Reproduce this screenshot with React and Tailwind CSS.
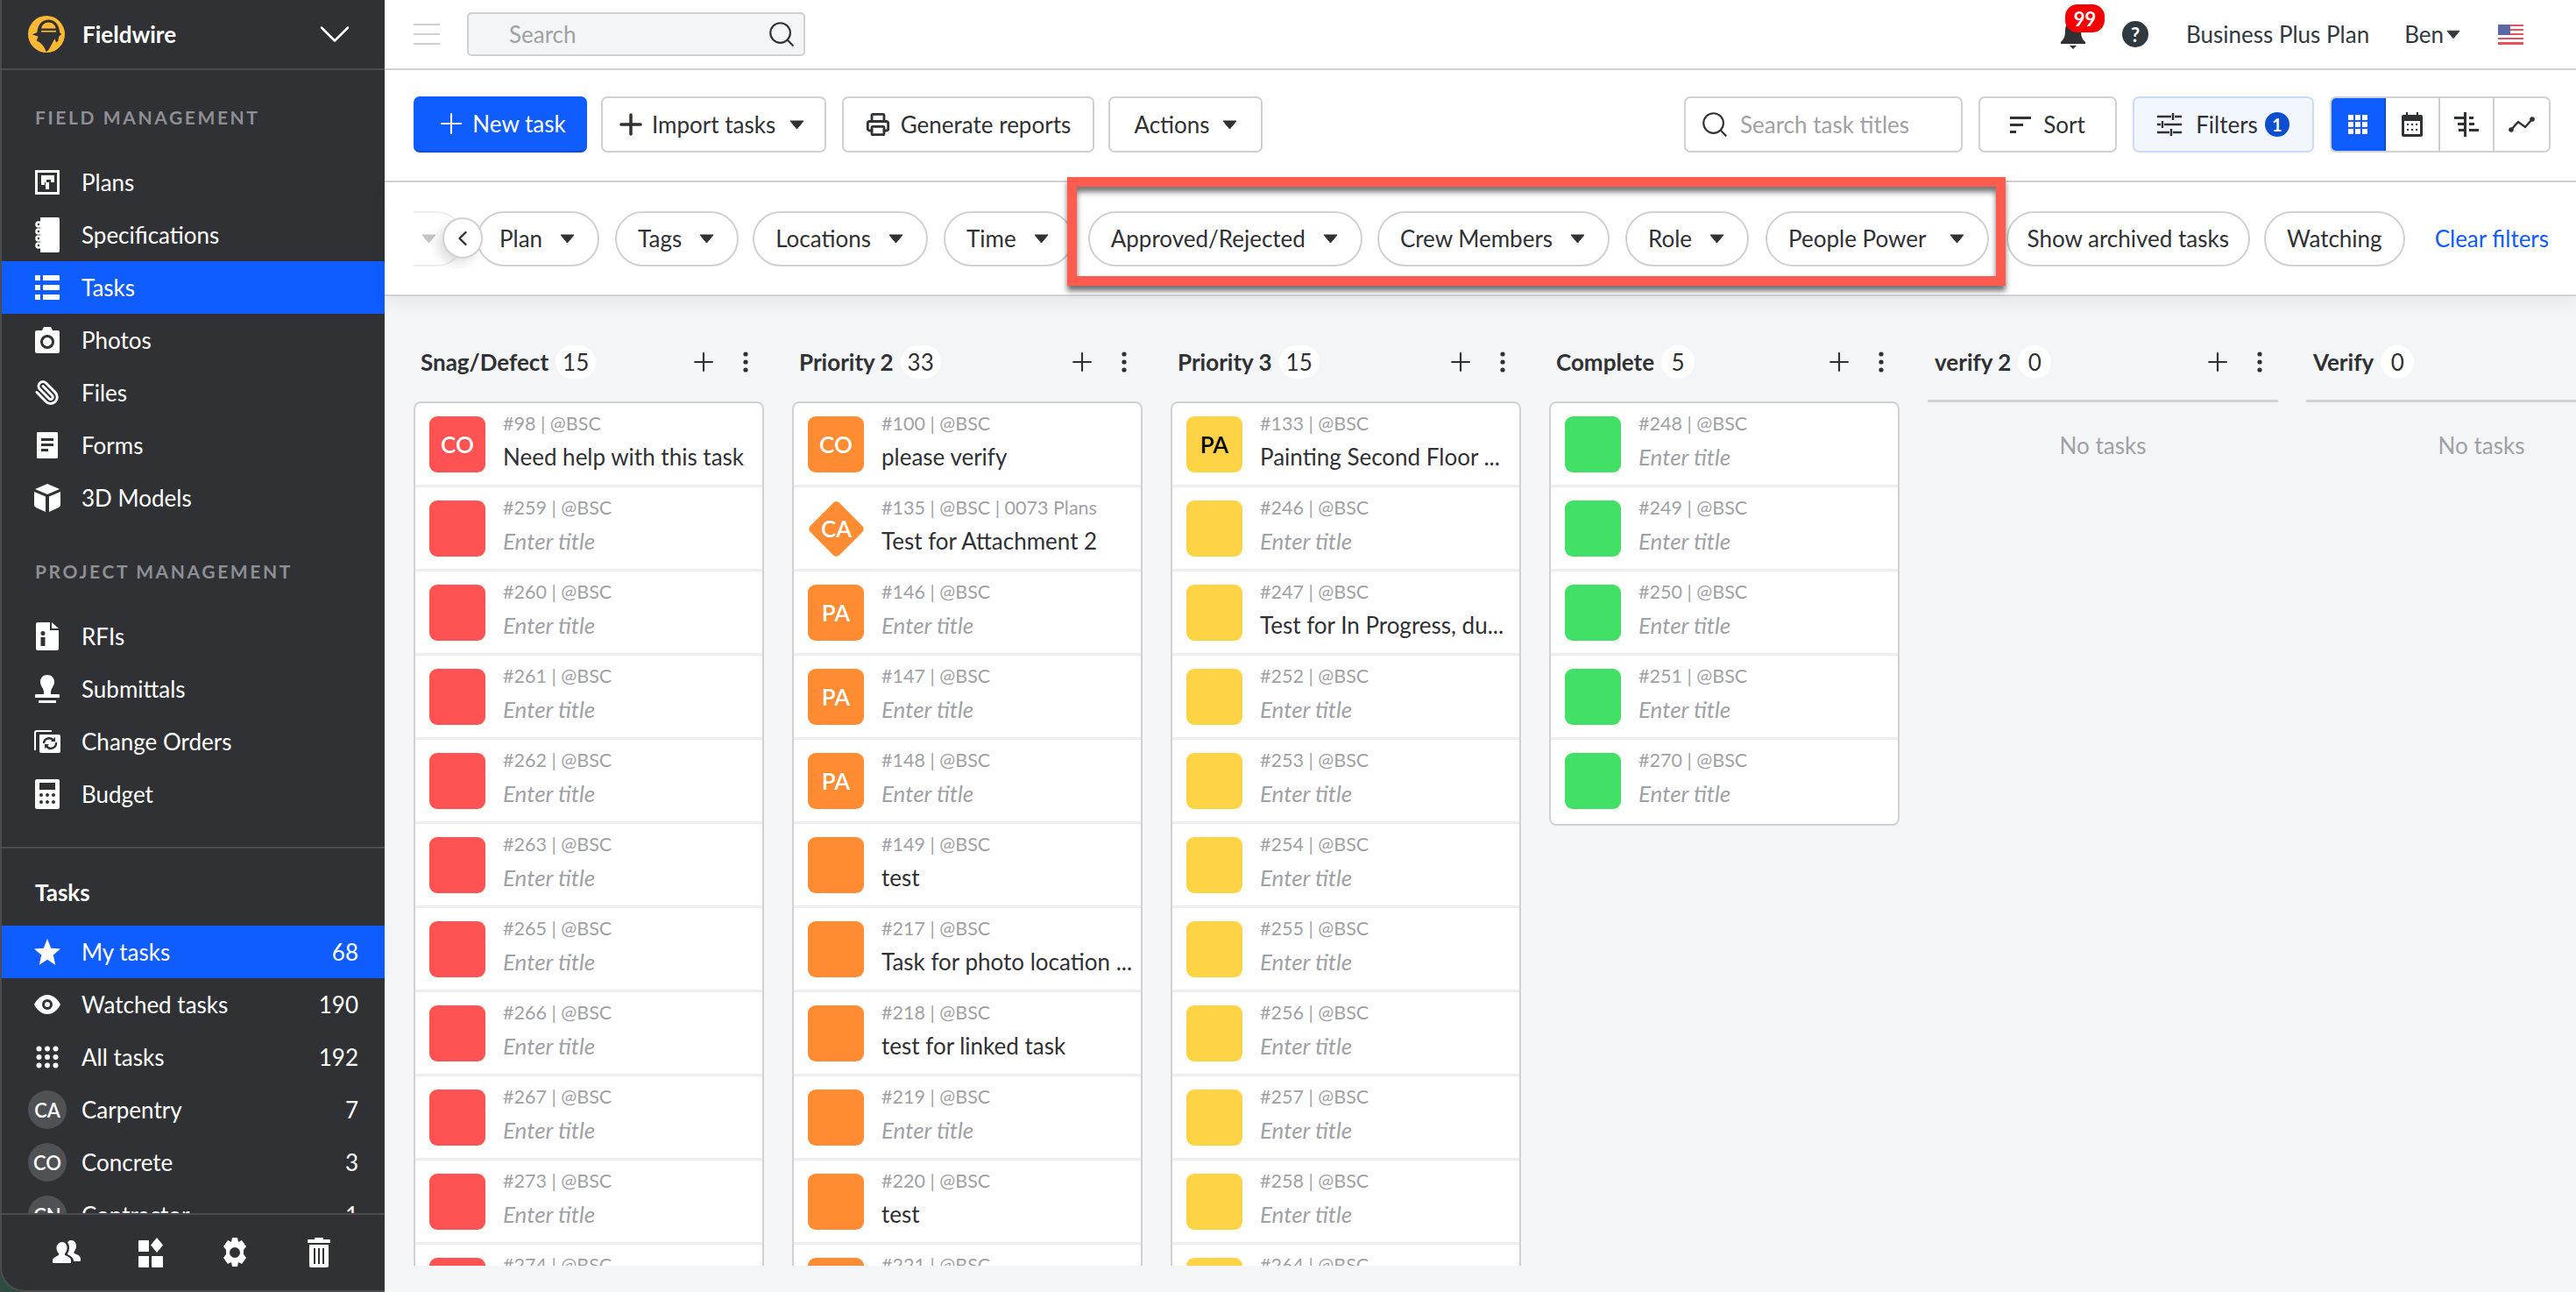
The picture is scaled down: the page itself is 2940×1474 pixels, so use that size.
import { Paperclip, Plus, Search, ChevronDown, ChevronLeft, Printer } from "lucide-react";

const RED = "bg-[#ff5252]";
const ORANGE = "bg-[#ff8c33]";
const YELLOW = "bg-[#ffd346]";
const GREEN = "bg-[#42e066]";

const Caret = ({ className = "text-[#303134]" }) => (
  <svg width="17" height="11" viewBox="0 0 17 11" className={`shrink-0 ${className}`}>
    <path d="M1 1h15L8.5 10z" fill="currentColor" stroke="currentColor" strokeLinejoin="round" />
  </svg>
);

const Logo = () => (
  <svg width="42" height="42" viewBox="0 0 122 122" className="shrink-0">
    <circle cx="61" cy="61" r="61" fill="#fdb933" />
    <path d="M14 62 30 55C32 28 48 13 68 13c20 0 35 15 37 42l6 6-9 8-2 14-12 10-6-4-14 24-8 7C55 104 46 90 28 82l6-13z" fill="#303134" />
    <path d="M44 42c2-12 12-20 24-20s22 8 24 20z" fill="#fdb933" />
    <path d="M44 49h49v5H44z" fill="#fdb933" />
    <path d="M88 76l14 30-16 12-12-14z" fill="#fdb933" />
  </svg>
);

const icons = {
  plans: (
    <svg width="28" height="36" viewBox="0 0 28 36">
      <path fillRule="evenodd" d="M0 4h28v28H0zm3 3v22h22V7z" fill="#fff" />
      <path d="M7 10h15v8h-4v-3h-5v3h3v8h-4v-8H11v3H7z" fill="#fff" />
    </svg>
  ),
  specs: (
    <svg width="28" height="40" viewBox="0 0 28 40">
      <path d="M6 0h20a2 2 0 0 1 2 2v36a2 2 0 0 1-2 2H6z" fill="#fff" />
      <g fill="none" stroke="#fff" strokeWidth="2.5">
        <circle cx="4" cy="8" r="2.5" /><circle cx="4" cy="16" r="2.5" /><circle cx="4" cy="24" r="2.5" /><circle cx="4" cy="32" r="2.5" />
      </g>
    </svg>
  ),
  tasks: (
    <svg width="28" height="30" viewBox="0 0 28 30" fill="#fff">
      <path d="M0 1h6v6H0zM9 1h19v6H9zM0 12h6v6H0zM9 12h19v6H9zM0 23h6v6H0zM9 23h19v6H9z" />
    </svg>
  ),
  photos: (
    <svg width="28" height="32" viewBox="0 0 28 32">
      <path fillRule="evenodd" fill="#fff" d="M2 5h6l2-4h8l2 4h6a2 2 0 0 1 2 2v22a2 2 0 0 1-2 2H2a2 2 0 0 1-2-2V7a2 2 0 0 1 2-2zm12 5a8 8 0 1 0 0 16 8 8 0 0 0 0-16zm0 3a5 5 0 1 1 0 10 5 5 0 0 1 0-10z" />
    </svg>
  ),
  forms: (
    <svg width="24" height="30" viewBox="0 0 24 30">
      <path fillRule="evenodd" fill="#fff" d="M1 0h22a1 1 0 0 1 1 1v28a1 1 0 0 1-1 1H1a1 1 0 0 1-1-1V1a1 1 0 0 1 1-1zm4 7v3h14V7zm0 6v3h14v-3zm0 6v3h8v-3z" />
    </svg>
  ),
  cube: (
    <svg width="30" height="32" viewBox="0 0 30 32" fill="#fff">
      <path d="M15 0 29 6 15 12 1 6zM0 9l13 5.500V32L2 27 0 25zM30 9l-13 5.500V32l11-5 2-2z" />
    </svg>
  ),
  rfi: (
    <svg width="26" height="32" viewBox="0 0 26 32">
      <path fillRule="evenodd" fill="#fff" d="M2 0h14v9h10v21a2 2 0 0 1-2 2H2a2 2 0 0 1-2-2V2a2 2 0 0 1 2-2zm6 10a2.500 2.500 0 1 0 0 5 2.500 2.500 0 0 0 0-5zm-2.500 7v10h5V17z" />
      <path d="M18 0l8 7h-8z" fill="#fff" />
    </svg>
  ),
  stamp: (
    <svg width="28" height="32" viewBox="0 0 28 32" fill="#fff">
      <path d="M14 0c5 0 8 3.500 8 8 0 5-4 7-4 12v2h9a1 1 0 0 1 1 1v3H0v-3a1 1 0 0 1 1-1h9v-2c0-5-4-7-4-12 0-4.500 3-8 8-8zM4 29h20v3H4z" />
    </svg>
  ),
  change: (
    <svg width="30" height="26" viewBox="0 0 30 26">
      <path d="M1 23V3a2 2 0 0 1 2-2h17" fill="none" stroke="#fff" strokeWidth="2" />
      <path fillRule="evenodd" fill="#fff" d="M6 5h22a2 2 0 0 1 2 2v17a2 2 0 0 1-2 2H8a2 2 0 0 1-2-2z" />
      <path d="M11 15a6 6 0 0 1 11-3M25 14a6 6 0 0 1-11 4" fill="none" stroke="#303134" strokeWidth="2.400" />
      <path d="M24 8v5h-5zM12 21v-5h5z" fill="#303134" />
    </svg>
  ),
  budget: (
    <svg width="28" height="34" viewBox="0 0 28 34">
      <path fillRule="evenodd" fill="#fff" d="M2 0h24a2 2 0 0 1 2 2v30a2 2 0 0 1-2 2H2a2 2 0 0 1-2-2V2a2 2 0 0 1 2-2zm3 4v8h18V4z" />
      <g fill="#303134">
        <circle cx="7" cy="18" r="2" /><circle cx="14" cy="18" r="2" /><circle cx="21" cy="18" r="2" />
        <circle cx="7" cy="26" r="2" /><circle cx="14" cy="26" r="2" /><circle cx="21" cy="26" r="2" />
      </g>
    </svg>
  ),
  star: (
    <svg width="30" height="30" viewBox="0 0 30 30" fill="#fff">
      <path d="M15 0l4.200 10.700L30 11.400l-8.200 7.200L24.300 30 15 23.800 5.700 30l2.500-11.400L0 11.400l10.800-.7z" />
    </svg>
  ),
  eye: (
    <svg width="30" height="22" viewBox="0 0 30 22">
      <path fillRule="evenodd" fill="#fff" d="M15 0c7 0 12 5 15 11-3 6-8 11-15 11S3 17 0 11C3 5 8 0 15 0zm0 5a6 6 0 1 0 0 12 6 6 0 0 0 0-12z" />
      <circle cx="15" cy="11" r="3" fill="#fff" />
    </svg>
  ),
  grid: (
    <svg width="26" height="26" viewBox="0 0 26 26" fill="#fff">
      <circle cx="3.500" cy="3.500" r="3" /><circle cx="13" cy="3.500" r="3" /><circle cx="22.500" cy="3.500" r="3" />
      <circle cx="3.500" cy="13" r="3" /><circle cx="13" cy="13" r="3" /><circle cx="22.500" cy="13" r="3" />
      <circle cx="3.500" cy="22.500" r="3" /><circle cx="13" cy="22.500" r="3" /><circle cx="22.500" cy="22.500" r="3" />
    </svg>
  ),
};

const NavItem = ({ icon, label, count, active, avatar }) => (
  <div className={`flex h-[60px] shrink-0 items-center pr-[30px] text-[26px] text-white ${active ? "bg-[#0f5cff]" : ""}`}>
    {avatar ? (
      <span className="ml-[30px] flex h-[44px] w-[44px] shrink-0 items-center justify-center rounded-full bg-[#505155] text-[22px] font-semibold">{avatar}</span>
    ) : (
      <span className="ml-[37px] flex w-[30px] shrink-0 items-center justify-center">{icon}</span>
    )}
    <span className={avatar ? "ml-[17px]" : "ml-[24px]"}>{label}</span>
    {count !== undefined && <span className="ml-auto">{count}</span>}
  </div>
);

const SectionLabel = ({ children }) => (
  <div className="mt-[24px] mb-[14px] flex h-[60px] items-center pl-[38px] text-[21px] font-bold tracking-[2.6px] text-[#8e8f94]">{children}</div>
);

const Sidebar = () => (
  <aside className="flex h-full w-[439px] shrink-0 flex-col rounded-bl-[28px] border-b-2 border-l-2 border-[#4c4d50] bg-[#303134]">
    <div className="flex h-[80px] shrink-0 items-center border-b-2 border-[#4c4d50] pl-[30px] pr-[27px]">
      <Logo />
      <span className="ml-[20px] text-[26px] font-bold text-white">Fieldwire</span>
      <ChevronDown size={60} strokeWidth={1} className="ml-auto text-white" />
    </div>
    <div className="min-h-0 flex-1 overflow-hidden">
      <SectionLabel>FIELD MANAGEMENT</SectionLabel>
      <NavItem icon={icons.plans} label="Plans" />
      <NavItem icon={icons.specs} label="Specifications" />
      <NavItem icon={icons.tasks} label="Tasks" active />
      <NavItem icon={icons.photos} label="Photos" />
      <NavItem icon={<Paperclip size={30} strokeWidth={2.4} className="-scale-x-100" />} label="Files" />
      <NavItem icon={icons.forms} label="Forms" />
      <NavItem icon={icons.cube} label="3D Models" />
      <SectionLabel>PROJECT MANAGEMENT</SectionLabel>
      <NavItem icon={icons.rfi} label="RFIs" />
      <NavItem icon={icons.stamp} label="Submittals" />
      <NavItem icon={icons.change} label="Change Orders" />
      <NavItem icon={icons.budget} label="Budget" />
      <div className="mt-[30px] flex h-[90px] items-center border-t-2 border-[#4c4d50] pl-[38px] pt-[12px] text-[26px] font-bold text-white">Tasks</div>
      <NavItem icon={icons.star} label="My tasks" count={68} active />
      <NavItem icon={icons.eye} label="Watched tasks" count={190} />
      <NavItem icon={icons.grid} label="All tasks" count={192} />
      <NavItem avatar="CA" label="Carpentry" count={7} />
      <NavItem avatar="CO" label="Concrete" count={3} />
      <NavItem avatar="CN" label="Contractor" count={1} />
    </div>
    <div className="flex h-[88px] shrink-0 items-center border-t-2 border-[#4c4d50] pl-[26px]">
      <span className="flex w-[96px] justify-center">
        <svg width="32" height="32" viewBox="0 0 32 32" fill="#fff">
          <path d="M11 4c3.500 0 5.500 3 5.500 6.500 0 3-1 5-2.500 6.500v2c4 1.500 7 3 7 6v3H0v-3c0-3 4-4.500 7-6v-2c-1.500-1.500-2.500-3.500-2.500-6.500C4.500 7 7.500 4 11 4z" />
          <path d="M21.500 2c3.500 0 5.500 3 5.500 6.500 0 3-1 5-2.500 6.500v2c3 1 7.500 2.500 7.500 6v3h-8c0-4-3-6-7-8v-1c1.500-2 2-4 2-7 0-2-.5-4-2-5.500C18 2.500 19.500 2 21.500 2z" />
        </svg>
      </span>
      <span className="flex w-[96px] justify-center">
        <svg width="28" height="34" viewBox="0 0 28 34" fill="#fff">
          <path d="M0 3h12v13H0zM21 0l7 8.500-7 8.500-7-8.500zM0 21h12v13H0zM15 21h13v13H15z" />
        </svg>
      </span>
      <span className="flex w-[96px] justify-center">
        <svg width="30" height="34" viewBox="0 0 30 34">
          <path fill="#fff" fillRule="evenodd" d="M12 0h6l1 5 4-2 5 7-3 4v5l3 4-5 7-4-2-1 5h-6l-1-5-4 2-5-7 3-4v-5L2 10l5-7 4 2zm3 11a6 6 0 1 0 0 12 6 6 0 0 0 0-12z" />
        </svg>
      </span>
      <span className="flex w-[96px] justify-center">
        <svg width="26" height="34" viewBox="0 0 26 34" fill="#fff">
          <path fillRule="evenodd" d="M8 0h10v2h8v4H0V2h8zM2 8h22v24a2 2 0 0 1-2 2H4a2 2 0 0 1-2-2zm5 4v18h2V12zm5 0v18h2V12zm5 0v18h2V12z" />
        </svg>
      </span>
    </div>
  </aside>
);

const TopBar = () => (
  <div className="flex h-[80px] shrink-0 items-center border-b-2 border-[#d2d2d4] pl-[33px] pr-[60px]">
    <div className="flex h-[24px] w-[30px] flex-col justify-between">
      <span className="h-[2px] bg-[#cfcfd2]" />
      <span className="h-[2px] bg-[#cfcfd2]" />
      <span className="h-[2px] bg-[#cfcfd2]" />
    </div>
    <div className="ml-[31px] flex h-[50px] w-[386px] items-center rounded-[5px] border-2 border-[#d0d1d4] bg-[#f4f5f7] pl-[46px] pr-[8px] text-[26px] text-[#a0a1a6]">
      Search
      <Search size={34} strokeWidth={1.5} className="ml-auto text-[#303134]" />
    </div>
    <div className="relative ml-auto h-[34px] w-[30px]">
      <svg width="30" height="34" viewBox="0 0 30 34" fill="#303134">
        <path d="M15 2c6 0 9 5 9 11 0 6 1 9 5 13v2H1v-2c4-4 5-7 5-13C6 7 9 2 15 2zM11 30h8l-4 4z" />
      </svg>
      <span className="absolute left-[6px] top-[-17px] flex h-[32px] w-[45px] items-center justify-center rounded-[14px] bg-[#f40000] text-[22px] font-bold text-white">99</span>
    </div>
    <span className="ml-[41px] flex h-[30px] w-[30px] items-center justify-center rounded-full bg-[#303840] text-[22px] font-bold text-white">?</span>
    <span className="ml-[43px] text-[26px] text-[#303840]">Business Plus Plan</span>
    <span className="ml-[40px] text-[26px] text-[#303840]">Ben</span>
    <Caret className="ml-[3px] w-[16px] text-[#303840]" />
    <svg width="29" height="23" viewBox="0 0 29 23" className="ml-[43px] shrink-0">
      <path fill="#fff" d="M0 0h29v23H0z" />
      <path fill="#e8505b" d="M0 0h29v2H0zM0 5h29v2H0zM0 10h29v2H0zM0 15h29v2H0zM0 20h29v3H0z" />
      <path fill="#5b67a8" d="M0 0h14v12H0z" />
    </svg>
  </div>
);

const ToolBtn = ({ className = "", children }) => (
  <div className={`flex h-[64px] shrink-0 items-center rounded-[7px] border-2 border-[#d0d1d6] text-[26px] text-[#303134] ${className}`}>{children}</div>
);

const ViewIcon = ({ active, className = "", children }) => (
  <div className={`flex h-full items-center justify-center ${active ? "bg-[#0f5cff]" : ""} ${className}`}>{children}</div>
);

const ToolBar = () => (
  <div className="flex h-[128px] shrink-0 items-center border-b-2 border-[#d2d2d4] pb-[2px] pl-[33px] pr-[29px]">
    <div className="flex h-[64px] w-[198px] items-center justify-center gap-[5px] rounded-[7px] border-b-2 border-[#0b4fd0] bg-[#0f5cff] text-[26px] text-white">
      <Plus size={38} strokeWidth={1.3} />
      New task
    </div>
    <ToolBtn className="ml-[16px] w-[257px] gap-[5px] pl-[13px]">
      <Plus size={38} strokeWidth={2.2} />
      Import tasks
      <Caret className="ml-[11px] text-[#303134]" />
    </ToolBtn>
    <ToolBtn className="ml-[18px] w-[288px] justify-center gap-[12px]">
      <Printer size={28} strokeWidth={2.4} />
      Generate reports
    </ToolBtn>
    <ToolBtn className="ml-[16px] w-[176px] justify-center gap-[14px]">
      Actions
      <Caret />
    </ToolBtn>
    <div className="ml-auto flex h-[64px] w-[318px] items-center gap-[12px] rounded-[7px] border-2 border-[#d0d1d6] pl-[16px] text-[26px] text-[#a0a1a6]">
      <Search size={34} strokeWidth={1.5} className="text-[#303134]" />
      Search task titles
    </div>
    <ToolBtn className="ml-[18px] w-[158px] justify-center gap-[14px]">
      <svg width="24" height="20" viewBox="0 0 24 20" fill="#303134"><path d="M0 1h24v3H0zM0 9h15v3H0zM0 17h7v3H0z" /></svg>
      Sort
    </ToolBtn>
    <div className="ml-[18px] flex h-[64px] w-[207px] items-center justify-center gap-[16px] rounded-[7px] border-2 border-[#c9dcff] bg-[#f2f6ff] text-[26px] text-[#303134]">
      <svg width="28" height="26" viewBox="0 0 28 26" fill="none" stroke="#303134" strokeWidth="2.400">
        <path d="M0 4h16M20 4h8M18 0v8M0 13h4M8 13h20M6 9v8M0 22h14M18 22h10M16 18v8" />
      </svg>
      <span className="flex items-center gap-[8px]">
        Filters
        <span className="flex h-[28px] w-[28px] items-center justify-center rounded-full bg-[#0b4fd0] text-[20px] font-bold text-white">1</span>
      </span>
    </div>
    <div className="ml-[18px] flex h-[64px] w-[252px] overflow-hidden rounded-[7px] border-2 border-[#d0d1d6]">
      <ViewIcon active className="w-[62px] border-r-2 border-[#0b4fd0]">
        <svg width="22" height="22" viewBox="0 0 22 22" fill="#fff">
          <path d="M0 0h6v6H0zM8 0h6v6H8zM16 0h6v6h-6zM0 8h6v6H0zM8 8h6v6H8zM16 8h6v6h-6zM0 16h6v6H0zM8 16h6v6H8zM16 16h6v6h-6z" />
        </svg>
      </ViewIcon>
      <ViewIcon className="w-[62px] border-r-2 border-[#d0d1d6]">
        <svg width="24" height="28" viewBox="0 0 24 28">
          <path fill="#303134" d="M2 3h3V0h2v3h10V0h2v3h3a2 2 0 0 1 2 2v21a2 2 0 0 1-2 2H2a2 2 0 0 1-2-2V5a2 2 0 0 1 2-2z" />
          <path fill="#fff" d="M3 10h18v15H3z" />
          <path fill="#303134" d="M6 13h2v2H6zM11 13h2v2h-2zM16 13h2v2h-2zM6 19h2v2H6zM11 19h2v2h-2zM16 19h2v2h-2z" />
        </svg>
      </ViewIcon>
      <ViewIcon className="w-[62px] border-r-2 border-[#d0d1d6]">
        <svg width="28" height="28" viewBox="0 0 28 28" fill="#303134">
          <path d="M11 0h3v28h-3zM0 5h11v3H0zM17 5h5v3h-5zM4 12h7v3H4zM17 12h6v3h-6zM5 19h6v3H5zM17 19h11v3H17z" />
        </svg>
      </ViewIcon>
      <ViewIcon className="flex-1">
        <svg width="30" height="18" viewBox="0 0 30 18" fill="none">
          <path d="M3 15 11 6l8 6 8-9" stroke="#303134" strokeWidth="2.400" />
          <circle cx="3" cy="15" r="2.800" fill="#303134" /><circle cx="27" cy="3" r="2.800" fill="#303134" />
        </svg>
      </ViewIcon>
    </div>
  </div>
);

const Pill = ({ label, caret = true, className = "", caretGap = "ml-[20px]" }) => (
  <div className={`flex h-[63px] shrink-0 items-center rounded-full border-2 border-[#d0d1d6] bg-white text-[26px] text-[#303134] ${caret ? "pl-[24px] pr-[26px]" : "px-[22px]"} ${className}`}>
    {label}
    {caret && <Caret className={`${caretGap} text-[#303134]`} />}
  </div>
);

const FilterRow = () => (
  <div className="relative flex h-[130px] shrink-0 items-center border-b-2 border-[#d2d2d4] pl-[33px] shadow-[0_8px_18px_rgba(0,0,0,0.06)]">
    <div className="flex h-[63px] w-[58px] shrink-0 items-center rounded-r-full border-y-2 border-r-2 border-[#eeeef0] pl-[9px]">
      <Caret className="text-[#c4c5c8]" />
    </div>
    <Pill label="Plan" className="ml-[14px]" />
    <Pill label="Tags" className="ml-[18px]" />
    <Pill label="Locations" className="ml-[16px]" />
    <Pill label="Time" className="ml-[18px]" />
    <Pill label="Approved/Rejected" className="ml-[17px]" />
    <Pill label="Crew Members" className="ml-[17px]" />
    <Pill label="Role" className="ml-[18px]" />
    <Pill label="People Power" className="ml-[19px]" caretGap="ml-[26px]" />
    <Pill label="Show archived tasks" caret={false} className="ml-[20px]" />
    <Pill label="Watching" caret={false} className="ml-[16px] px-[24px]" />
    <span className="ml-[34px] text-[26px] text-[#0f5cff]">Clear filters</span>
    <div className="absolute left-[66px] top-[40px] flex h-[47px] w-[46px] items-center justify-center rounded-full border-2 border-[#d0d1d6] bg-white shadow-[-6px_6px_12px_rgba(0,0,0,0.12)]">
      <ChevronLeft size={28} strokeWidth={2} className="text-[#303134]" />
    </div>
    <div className="pointer-events-none absolute left-[779px] top-[-6px] h-[124px] w-[1071px] border-[11px] border-[#ff5b4f] shadow-[0_6px_6px_rgba(0,0,0,0.55),inset_0_6px_6px_rgba(0,0,0,0.55)]" />
  </div>
);

const TaskIcon = ({ color, label, dark, diamond }) => {
  if (diamond) {
    return (
      <div className="flex h-[64px] w-[64px] shrink-0 items-center justify-center">
        <div className={`flex h-[47px] w-[47px] rotate-45 items-center justify-center rounded-[5px] ${color}`}>
          <span className="-rotate-45 text-[26px] font-semibold text-white">{label}</span>
        </div>
      </div>
    );
  }
  return (
    <div className={`flex h-[64px] w-[64px] shrink-0 items-center justify-center rounded-[9px] text-[26px] font-semibold ${dark ? "text-black" : "text-white"} ${color}`}>{label}</div>
  );
};

const TaskRow = ({ id, extra, title, color, label, dark, diamond, last }) => (
  <div className={`flex h-[96px] items-start pl-[16px] pt-[15px] ${last ? "h-[94px]" : "border-b-[3px] border-[#eeeef0]"}`}>
    <TaskIcon color={color} label={label} dark={dark} diamond={diamond} />
    <div className="ml-[20px] min-w-0">
      <div className="-mt-[6px] h-[28px] text-[21.5px] leading-[28px] text-[#a0a1a6]">
        #{id} | @BSC{extra ? ` | ${extra}` : ""}
      </div>
      <div className={`mt-[6px] h-[36px] whitespace-nowrap text-[26px] leading-[36px] ${title ? "text-[#303134]" : "italic text-[#a0a1a6]"}`}>
        {title || "Enter title"}
      </div>
    </div>
  </div>
);

const ColumnHead = ({ name, count, actions = true }) => (
  <div className="flex h-[40px] items-center pl-[8px] pr-[18px]">
    <span className="text-[26px] font-bold text-[#303134]">{name}</span>
    <span className="ml-[8px] flex h-[38px] min-w-[38px] items-center justify-center rounded-full bg-white px-[8px] text-[26px] text-[#303134]">{count}</span>
    {actions && <Plus size={34} strokeWidth={1.5} className="ml-auto text-[#303134]" />}
    {actions && (
      <svg width="6" height="24" viewBox="0 0 6 24" fill="#303134" className="ml-[28px]">
        <circle cx="3" cy="3" r="2.600" /><circle cx="3" cy="12" r="2.600" /><circle cx="3" cy="21" r="2.600" />
      </svg>
    )}
  </div>
);

const Column = ({ name, count, color, tasks, actions }) => (
  <div className="w-[400px] shrink-0">
    <ColumnHead name={name} count={count} actions={actions} />
    {tasks ? (
      <div className="mt-[25px] rounded-[8px] border-2 border-[#d0d1d6] bg-white">
        {tasks.map((t, i) => (
          <TaskRow key={t.id} {...t} color={color} last={count === 5 && i === tasks.length - 1} />
        ))}
      </div>
    ) : (
      <div className="mt-[23px] border-t-[3px] border-[#d0d1d6] pt-[30px] text-center text-[26px] text-[#a0a1a6]">No tasks</div>
    )}
  </div>
);

const ids = (list) => list.map((id) => ({ id }));

const snag = [{ id: 98, label: "CO", title: "Need help with this task" }, ...ids([259, 260, 261, 262, 263, 265, 266, 267, 273, 274])];
const priority2 = [
  { id: 100, label: "CO", title: "please verify" },
  { id: 135, label: "CA", diamond: true, extra: "0073 Plans", title: "Test for Attachment 2" },
  { id: 146, label: "PA" },
  { id: 147, label: "PA" },
  { id: 148, label: "PA" },
  { id: 149, title: "test" },
  { id: 217, title: "Task for photo location ..." },
  { id: 218, title: "test for linked task" },
  { id: 219 },
  { id: 220, title: "test" },
  { id: 221 },
];
const priority3 = [
  { id: 133, label: "PA", dark: true, title: "Painting Second Floor ..." },
  { id: 246 },
  { id: 247, title: "Test for In Progress, du..." },
  ...ids([252, 253, 254, 255, 256, 257, 258, 264]),
];
const complete = ids([248, 249, 250, 251, 270]);

const Board = () => (
  <div className="flex min-h-0 flex-1 flex-col bg-[#f4f5f7] pb-[30px]">
    <div className="flex min-h-0 flex-1 gap-[32px] overflow-hidden pl-[33px] pt-[55px]">
      <Column name="Snag/Defect" count={15} color={RED} tasks={snag} />
      <Column name="Priority 2" count={33} color={ORANGE} tasks={priority2} />
      <Column name="Priority 3" count={15} color={YELLOW} tasks={priority3} />
      <Column name="Complete" count={5} color={GREEN} tasks={complete} />
      <Column name="verify 2" count={0} />
      <Column name="Verify" count={0} />
    </div>
  </div>
);

export default function App() {
  return (
    <div className="flex h-[1474px] w-[2940px] overflow-hidden bg-[#2f4a3f] [font-family:Lato,sans-serif]">
      <Sidebar />
      <main className="flex min-w-0 flex-1 flex-col bg-white">
        <TopBar />
        <ToolBar />
        <FilterRow />
        <Board />
      </main>
    </div>
  );
}
